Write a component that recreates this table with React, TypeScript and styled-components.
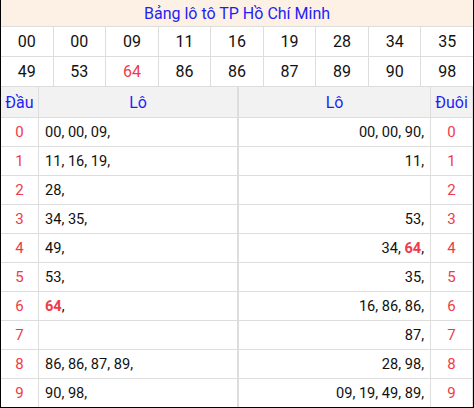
import styled, { createGlobalStyle } from "styled-components";

const GlobalStyle = createGlobalStyle`
  html, body {
    margin: 0;
    padding: 0;
    background: #fff;
  }
  body {
    font-family: Roboto, "Liberation Sans", Arial, sans-serif;
  }
`;

const prizes = ["00", "00", "09", "11", "16", "19", "28", "34", "35", "49", "53", "64", "86", "86", "87", "89", "90", "98"];
const special = "64";

const dau: string[][] = [
  ["00", "00", "09"],
  ["11", "16", "19"],
  ["28"],
  ["34", "35"],
  ["49"],
  ["53"],
  ["64"],
  [],
  ["86", "86", "87", "89"],
  ["90", "98"],
];

const duoi: string[][] = [
  ["00", "00", "90"],
  ["11"],
  [],
  ["53"],
  ["34", "64"],
  ["35"],
  ["16", "86", "86"],
  ["87"],
  ["28", "98"],
  ["09", "19", "49", "89"],
];

const renderList = (list: string[]) =>
  list.map((n, i) => (
    <span key={i}>
      {n === special ? <Hot>{n}</Hot> : n}
      {i < list.length - 1 ? ", " : ","}
    </span>
  ));

const App = () => {
  return (
    <>
      <GlobalStyle />
      <Board>
        <Title>Bảng lô tô TP Hồ Chí Minh</Title>
        <NumberGrid>
          {prizes.map((n, i) => (
            <NumberCell key={i} $hot={n === special}>
              {n}
            </NumberCell>
          ))}
        </NumberGrid>
        <LotoTable>
          <HeadCell>Đầu</HeadCell>
          <HeadCell>Lô</HeadCell>
          <HeadCell $split>Lô</HeadCell>
          <HeadCell>Đuôi</HeadCell>
          {dau.map((row, i) => (
            <Row key={i}>
              <IndexCell>{i}</IndexCell>
              <ValueCell>{renderList(row)}</ValueCell>
              <ValueCell $right>{renderList(duoi[i])}</ValueCell>
              <IndexCell>{i}</IndexCell>
            </Row>
          ))}
        </LotoTable>
      </Board>
    </>
  );
};

export default App;

const Board = styled.div`
  width: 474px;
  box-sizing: border-box;
  border: 1px solid #000;
  border-top: none;
  background: #dddddd;
  display: flex;
  flex-direction: column;
  gap: 1px;
`;

const Title = styled.div`
  height: 26px;
  background: #fdf0e5;
  color: #1f1ff5;
  font-size: 16px;
  display: flex;
  align-items: center;
  justify-content: center;
`;

const NumberGrid = styled.div`
  display: grid;
  grid-template-columns: repeat(9, 1fr);
  grid-auto-rows: 29px;
  gap: 1px;
`;

const NumberCell = styled.div<{ $hot?: boolean }>`
  background: #fff;
  color: ${({ $hot }) => ($hot ? "#ee3b4b" : "#111")};
  font-size: 16px;
  display: flex;
  align-items: center;
  justify-content: center;
`;

const LotoTable = styled.div`
  display: grid;
  grid-template-columns: 37px 198px 192px 41px;
  grid-template-rows: 30px;
  grid-auto-rows: 28px;
  column-gap: 1px;
  row-gap: 1px;
`;

const Row = styled.div`
  display: contents;
`;

const HeadCell = styled.div<{ $split?: boolean }>`
  background: #f2f2f2;
  color: #1f1ff5;
  font-size: 16px;
  display: flex;
  align-items: center;
  justify-content: center;
  border-left: ${({ $split }) => ($split ? "1px solid #dddddd" : "none")};
`;

const IndexCell = styled.div`
  background: #fff;
  color: #ee3b4b;
  font-size: 15px;
  display: flex;
  align-items: center;
  justify-content: center;
`;

const ValueCell = styled.div<{ $right?: boolean }>`
  background: #fff;
  color: #111;
  font-size: 14.6px;
  display: flex;
  align-items: center;
  justify-content: ${({ $right }) => ($right ? "flex-end" : "flex-start")};
  padding: 0 6px;
  white-space: pre;
  border-left: ${({ $right }) => ($right ? "1px solid #dddddd" : "none")};
`;

const Hot = styled.b`
  color: #ee3b4b;
  font-weight: 700;
`;
